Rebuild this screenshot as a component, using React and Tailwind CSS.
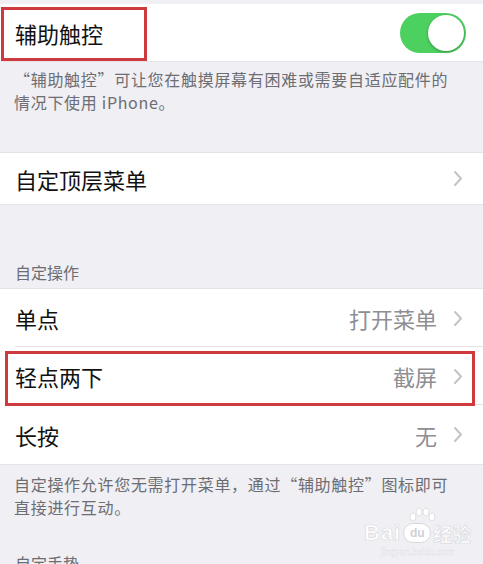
import React from "react";

const font = { fontFamily: '"Noto Sans CJK SC", "Noto Sans", sans-serif' };

function Chevron() {
  return (
    <svg width="10" height="17" viewBox="0 0 10 17" className="shrink-0">
      <path d="M2 2 L8 8.5 L2 15" fill="none" stroke="#c4c4c8" strokeWidth="2" strokeLinecap="round" strokeLinejoin="round" />
    </svg>
  );
}

function Row({ label, value, h = "h-[58px]", border = true }) {
  return (
    <div className={`relative flex items-center ${h} pl-[15px] pr-[20px] bg-white`}>
      <span className="text-[22px] text-[#111] leading-none">{label}</span>
      <div className="ml-auto flex items-center gap-[16px]">
        {value && <span className="text-[22px] text-[#8e8e93] leading-none">{value}</span>}
        <Chevron />
      </div>
      {border && <div className="absolute left-[15px] right-0 bottom-0 h-px bg-[#e3e3e8]" />}
    </div>
  );
}

export default function App() {
  return (
    <div className="w-[483px] h-[564px] overflow-hidden bg-[#efeff4] relative" style={font}>
      <div className="h-[4px]" />
      {/* Row 1 */}
      <div className="relative flex items-center h-[58px] pl-[15px] pr-[17px] bg-white border-b border-[#e3e3e8]">
        <span className="text-[22px] text-[#111] leading-none">辅助触控</span>
        <div className="ml-auto w-[66px] h-[40px] rounded-full bg-[#4cd060] flex items-center justify-end p-[2px]">
          <div className="w-[36px] h-[36px] rounded-full bg-white shadow-[0_1px_3px_rgba(0,0,0,0.3)]" />
        </div>
        <div className="absolute left-[1px] top-[3px] w-[146px] h-[54px] border-[3px] border-[#cf3a3f]" />
      </div>
      <div className="h-[90px] ml-[14px] w-[445px] pt-[6px] text-[16px] leading-[23px] tracking-[0.7px] text-[#6d6d72]">
        “辅助触控”可让您在触摸屏幕有困难或需要自适应配件的情况下使用 iPhone。
      </div>
      <div className="border-y border-[#e3e3e8]">
        <Row label="自定顶层菜单" h="h-[51px]" border={false} />
      </div>
      <div className="h-[83px] flex items-end px-[15px] pb-[8px]">
        <span className="text-[16px] text-[#6d6d72] leading-none">自定操作</span>
      </div>
      <div className="border-y border-[#e3e3e8] relative">
        <Row label="单点" value="打开菜单" />
        <Row label="轻点两下" value="截屏" />
        <Row label="长按" value="无" h="h-[59px]" border={false} />
        <div className="absolute left-[5px] top-[62px] w-[470px] h-[55px] border-[3px] border-[#cf3a3f]" />
      </div>
      <div className="ml-[14px] w-[445px] pt-[8px] text-[16px] leading-[23px] tracking-[0.7px] text-[#6d6d72]">
        自定操作允许您无需打开菜单，通过“辅助触控”图标即可直接进行互动。
      </div>
      <div className="px-[15px] pt-[36px] text-[16px] text-[#6d6d72] leading-none">自定手势</div>

      {/* watermark */}
      <div className="absolute left-[364px] top-[506px] flex flex-col items-center text-white" style={{ fontFamily: '"Liberation Sans", sans-serif' }}>
        <svg width="30" height="16" viewBox="0 0 30 16" className="ml-[8px]">
          <g fill="#ffffff" stroke="#d8d8de" strokeWidth="0.8">
            <ellipse cx="6" cy="11" rx="3" ry="4" />
            <ellipse cx="12" cy="6" rx="3" ry="4" />
            <ellipse cx="19" cy="6" rx="3" ry="4" />
            <ellipse cx="25" cy="11" rx="3" ry="4" />
          </g>
        </svg>
        <div className="flex items-center gap-[2px]">
          <span className="text-[22px] font-bold leading-none tracking-[1px]" style={{ WebkitTextStroke: "0.6px #d8d8de" }}>Bai</span>
          <span className="block w-[28px] h-[20px] rounded-full bg-white border border-[#d8d8de] text-[#d0d0d6] text-[12px] font-bold leading-[18px] text-center">du</span>
          <span className="text-[19px] font-bold leading-none" style={{ WebkitTextStroke: "0.6px #d8d8de", fontFamily: '"Noto Sans CJK SC", sans-serif' }}>经验</span>
        </div>
        <span className="text-[9px] leading-none mt-[4px] text-white" style={{ WebkitTextStroke: "0.3px #d8d8de" }}>jingyan.baidu.com</span>
      </div>
    </div>
  );
}
